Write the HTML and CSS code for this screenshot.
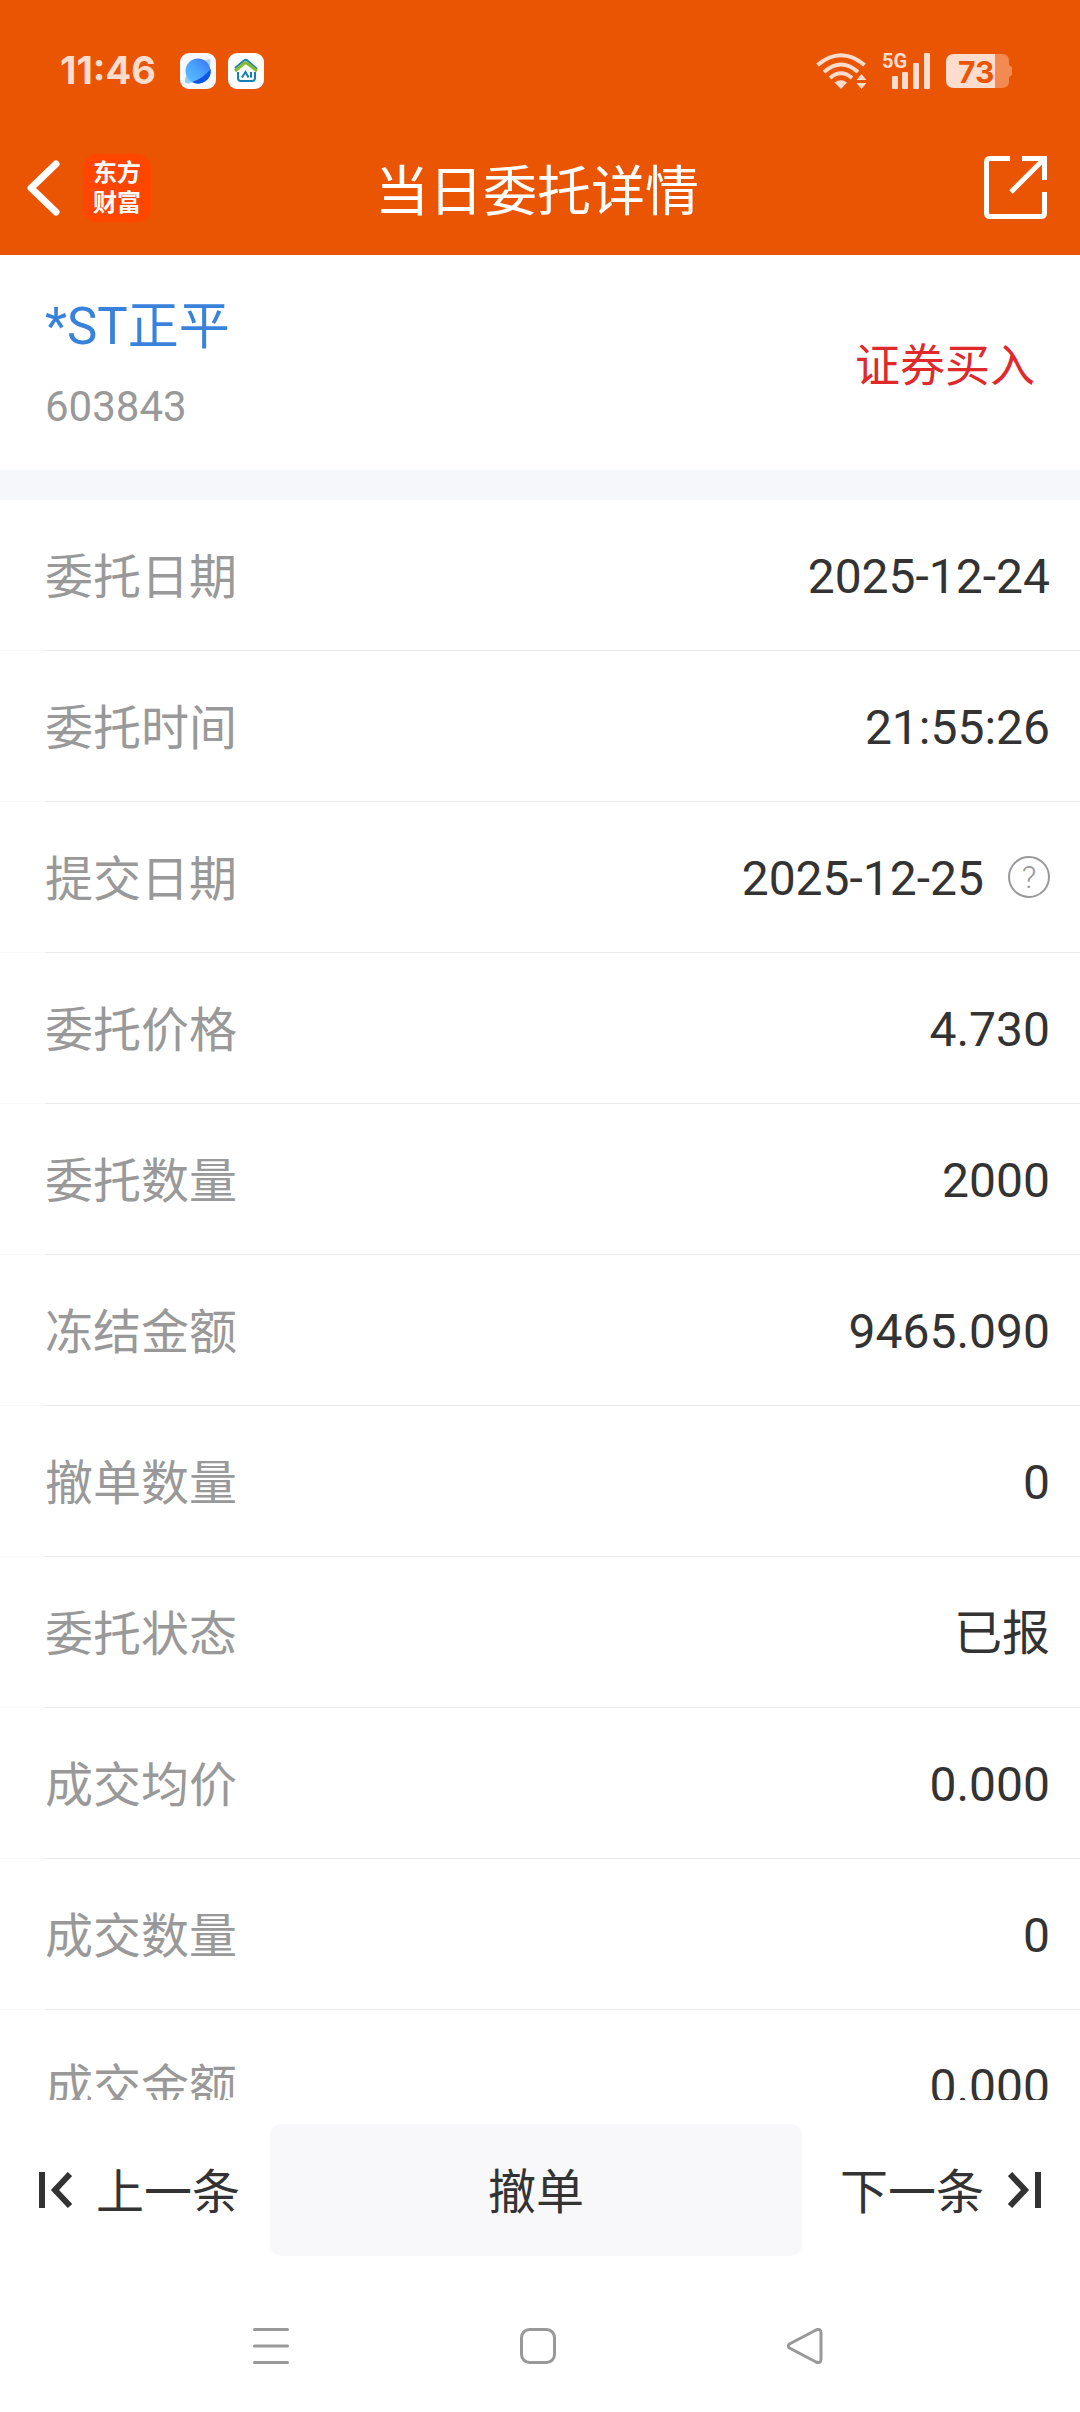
FILE: index.html
```html
<!DOCTYPE html>
<html lang="zh-CN">
<head>
<meta charset="utf-8">
<meta name="viewport" content="width=device-width, initial-scale=1">
<title>当日委托详情</title>
<link rel="stylesheet" href="styles.css">
</head>
<body>
<header class="top">
  <div class="status">
    <div class="status-left">
      <time class="clock">11:46</time>
      <svg class="app-icon" viewBox="0 0 36 36" aria-hidden="true">
        <defs>
          <linearGradient id="planet" x1="0" y1="1" x2="1" y2="0"><stop offset="0" stop-color="#5cc4fe"/><stop offset=".5" stop-color="#4aa4fc"/><stop offset="1" stop-color="#3a6ff6"/></linearGradient>
        </defs>
        <rect width="36" height="36" rx="9" fill="#f6f8fc"/>
        <path d="M24 8 Q31 4 30.500 8 L30 13 Z" fill="#a9d0fb"/>
        <path d="M6 23 Q3 31 8 30.500 L13 29 Z" fill="#8fcdfc"/>
        <circle cx="18" cy="18" r="12.500" fill="url(#planet)"/>
        <path d="M30.500 16 A12.500 12.500 0 0 1 12 29 Q24 25 30.500 16 Z" fill="#0d55e2"/>
      </svg>
      <svg class="app-icon" viewBox="0 0 36 36" aria-hidden="true">
        <rect width="36" height="36" rx="9" fill="#fff"/>
        <path d="M7 15 L16 7.500 Q18 6 20 8 L29 16" fill="none" stroke="#1d80b8" stroke-width="2"/>
        <path d="M7 18 L16 10.500 Q18 9 20 11 L29 18" fill="none" stroke="#86bc2c" stroke-width="3"/>
        <path d="M10 19 V25 Q10 28 13 28 H24 Q27 28 27 25 V19" fill="none" stroke="#1480b4" stroke-width="2"/>
        <path d="M14 24.500 L17.500 19 L20.500 24.500 M23 19 V24.500" fill="none" stroke="#1480b4" stroke-width="2"/>
      </svg>
    </div>
    <div class="status-right">
      <svg class="wifi" viewBox="0 0 50 36" aria-hidden="true">
        <g fill="none" stroke="#fcdccd" stroke-width="4">
          <path d="M1.500 12 Q25 -7.500 48.500 12"/>
          <path d="M8 19 Q25 4 42 19"/>
          <path d="M14 25 Q25 15.500 36 25"/>
        </g>
        <path d="M18.500 29.500 Q25 25 31 29.500 L25 36 Z" fill="#fcdccd"/>
        <rect x="38" y="20" width="12" height="16" fill="#ea5504"/>
        <path d="M40.500 27 L45.500 21 L50.500 27 Z M40.500 30 H50.500 L45.500 36 Z" fill="#fcdccd"/>
      </svg>
      <svg class="signal" viewBox="0 0 48 38" aria-hidden="true">
        <text class="signal-type" x="0" y="16">5G</text>
        <g fill="#fcdccd">
          <rect x="10" y="24" width="6" height="13" rx="1"/>
          <rect x="20" y="20" width="6" height="17" rx="1"/>
          <rect x="31" y="11" width="6" height="26" rx="1"/>
          <rect x="42" y="1" width="6" height="36" rx="1"/>
        </g>
      </svg>
      <svg class="battery" viewBox="0 0 66 34" aria-label="73%">
        <path d="M49 0 H56 Q63 0 63 7 V11 L66 13 V21 L63 23 V27 Q63 34 56 34 H49 Z" fill="#f28a52"/>
        <path d="M49 0 H8 Q0 0 0 8 V26 Q0 34 8 34 H49 Z" fill="#fcdccd"/>
        <text class="battery-level" x="12" y="29">73</text>
      </svg>
    </div>
  </div>
  <div class="titlebar">
    <div class="title-side">
      <button class="icon-btn" type="button" aria-label="返回">
        <svg width="33" height="56" viewBox="0 0 33 56"><path d="M29 4 L4 28 L29 52" fill="none" stroke="#fff" stroke-width="7" stroke-linecap="round" stroke-linejoin="round"/></svg>
      </button>
      <span class="brand">东方<br>财富</span>
    </div>
    <h1 class="title">当日委托详情</h1>
    <div class="title-side title-side-end">
      <button class="icon-btn" type="button" aria-label="分享">
        <svg width="63" height="63" viewBox="0 0 63 63" fill="none" stroke="#fff" stroke-width="5"><path d="M26 2.500 H6 Q2.500 2.500 2.500 6 V57 Q2.500 60.500 6 60.500 H57 Q60.500 60.500 60.500 57 V36"/><path d="M38 2.500 H60.500 V24 M60 3 L27 36"/></svg>
      </button>
    </div>
  </div>
</header>

<section class="stock">
  <div class="stock-id">
    <a class="stock-name" href="#">*ST正平</a>
    <span class="stock-code">603843</span>
  </div>
  <span class="side">证券买入</span>
</section>

<main class="details">
  <dl class="rows">
    <div class="row"><dt>委托日期</dt><dd>2025-12-24</dd></div>
    <div class="row"><dt>委托时间</dt><dd>21:55:26</dd></div>
    <div class="row"><dt>提交日期</dt><dd>2025-12-25<button class="help" type="button" aria-label="说明">?</button></dd></div>
    <div class="row"><dt>委托价格</dt><dd>4.730</dd></div>
    <div class="row"><dt>委托数量</dt><dd>2000</dd></div>
    <div class="row"><dt>冻结金额</dt><dd>9465.090</dd></div>
    <div class="row"><dt>撤单数量</dt><dd>0</dd></div>
    <div class="row"><dt>委托状态</dt><dd>已报</dd></div>
    <div class="row"><dt>成交均价</dt><dd>0.000</dd></div>
    <div class="row"><dt>成交数量</dt><dd>0</dd></div>
    <div class="row"><dt>成交金额</dt><dd>0.000</dd></div>
  </dl>
</main>

<footer class="actions">
  <button class="step" type="button">
    <svg width="33" height="36" viewBox="0 0 33 36" fill="none" stroke="#333" stroke-width="6" aria-hidden="true"><path d="M3 0 V36 M31 2 L16 18 L31 34"/></svg>
    <span class="action-text">上一条</span>
  </button>
  <button class="cancel" type="button"><span class="action-text">撤单</span></button>
  <button class="step step-next" type="button">
    <span class="action-text">下一条</span>
    <svg width="33" height="36" viewBox="0 0 33 36" fill="none" stroke="#333" stroke-width="6" aria-hidden="true"><path d="M30 0 V36 M2 2 L17 18 L2 34"/></svg>
  </button>
</footer>

<nav class="sysnav">
  <button class="icon-btn" type="button" aria-label="最近任务">
    <svg width="36" height="36" viewBox="0 0 36 36" stroke="#999" stroke-width="3" stroke-linecap="round"><path d="M1.500 1.500 H34.500 M1.500 18 H34.500 M1.500 34.500 H34.500"/></svg>
  </button>
  <button class="icon-btn" type="button" aria-label="主屏幕">
    <svg width="36" height="36" viewBox="0 0 36 36" fill="none" stroke="#999" stroke-width="3"><rect x="1.500" y="1.500" width="33" height="33" rx="8"/></svg>
  </button>
  <button class="icon-btn" type="button" aria-label="返回上一级">
    <svg width="36" height="36" viewBox="0 0 36 36" fill="none" stroke="#999" stroke-width="3"><path d="M2.500 16 Q0 18 2.500 20 L29 34 Q34 36 34 31 V5 Q34 0 29 2 Z"/></svg>
  </button>
</nav>
</body>
</html>
```
FILE: styles.css
```css
* {
  box-sizing: border-box;
}

body {
  display: flex;
  flex-direction: column;
  height: 100vh;
  margin: 0;
  background: #fff;
  color: #333;
  font-family: Roboto, "Noto Sans CJK SC", sans-serif;
  font-size: 48px;
  line-height: 60px;
}

button {
  padding: 0;
  border: 0;
  background: none;
  color: inherit;
  font: inherit;
}

svg {
  display: block;
  flex: none;
}

.icon-btn {
  display: flex;
  align-items: center;
  justify-content: center;
}

/* Header */
.top {
  flex: none;
  background: #ea5504;
  color: #fff;
}

.status {
  display: flex;
  align-items: center;
  justify-content: space-between;
  height: 120px;
  padding: 22px 68px 0 60px;
}

.status-left,
.status-right {
  display: flex;
  align-items: center;
}

.status-left {
  gap: 12px;
}

.status-right {
  gap: 16px;
}

.clock {
  margin-right: 12px;
  color: #fcdccd;
  font-family: Inter, sans-serif;
  font-size: 38px;
  font-weight: 700;
  line-height: 44px;
  padding-bottom: 2px;
}

.app-icon {
  width: 36px;
  height: 36px;
}

.wifi {
  width: 50px;
  height: 36px;
}

.signal {
  width: 48px;
  height: 38px;
  overflow: visible;
}

.signal-type {
  fill: #fcdccd;
  font-family: Roboto, sans-serif;
  font-size: 20px;
  font-weight: 700;
}

.battery {
  width: 66px;
  height: 34px;
  overflow: visible;
}

.battery-level {
  fill: #ea5504;
  font-family: Inter, sans-serif;
  font-size: 30px;
  font-weight: 700;
}

.titlebar {
  display: grid;
  grid-template-columns: 1fr auto 1fr;
  align-items: center;
  height: 135px;
  padding: 0 33px 0 27px;
}

.title-side {
  display: flex;
  align-items: center;
  gap: 23px;
}

.title-side-end {
  justify-content: flex-end;
}

.brand {
  width: 68px;
  padding: 2px 0 6px;
  border-radius: 14px;
  background: #ff4600;
  font-family: "Noto Sans CJK SC", sans-serif;
  font-size: 24px;
  font-weight: 700;
  line-height: 30px;
  text-align: center;
}

.title {
  margin: 0;
  padding-top: 10px;
  font-size: 54px;
  font-weight: 400;
  line-height: 60px;
}

/* Stock summary */
.stock {
  display: flex;
  flex: none;
  align-items: center;
  justify-content: space-between;
  height: 245px;
  padding: 8px 45px 0;
  border-bottom: 30px solid #f6f7fa;
}

.stock-id {
  display: flex;
  flex-direction: column;
  gap: 20px;
}

.stock-name {
  color: #3982dc;
  font-size: 51px;
  text-decoration: none;
}

.stock-code {
  color: #999;
  font-size: 42px;
}

.side {
  color: #e0292b;
  font-size: 45px;
}

/* Order details */
.details {
  flex: 1;
  min-height: 0;
  overflow-y: auto;
  scrollbar-width: none;
}

.rows {
  margin: 0;
}

.row {
  display: flex;
  align-items: center;
  justify-content: space-between;
  height: 151px;
  padding: 0 30px 0 45px;
  background: linear-gradient(90deg, #f8f8f8 45px, #ebebeb 45px) bottom / 100% 1px no-repeat;
}

.row dt {
  padding-top: 4px;
  color: #999;
}

.row dd {
  display: flex;
  align-items: center;
  gap: 24px;
  margin: 0;
  padding-top: 2px;
}

.help {
  width: 42px;
  height: 42px;
  margin-bottom: 4px;
  border: 2px solid #999;
  border-radius: 50%;
  color: #999;
  font-size: 32px;
  font-weight: 300;
  line-height: 38px;
}

/* Bottom bars */
.actions {
  display: flex;
  flex: none;
  gap: 30px;
  padding: 24px 39px;
}

.action-text {
  display: block;
  padding-top: 6px;
}

.step {
  display: flex;
  align-items: center;
  gap: 24px;
}

.step-next {
  padding-left: 8px;
}

.cancel {
  flex: 1;
  height: 132px;
  border-radius: 12px;
  background: #f8f8fb;
}

.sysnav {
  display: grid;
  grid-template-columns: repeat(3, 1fr);
  flex: none;
  height: 132px;
  padding: 0 142px 0 138px;
}
```
